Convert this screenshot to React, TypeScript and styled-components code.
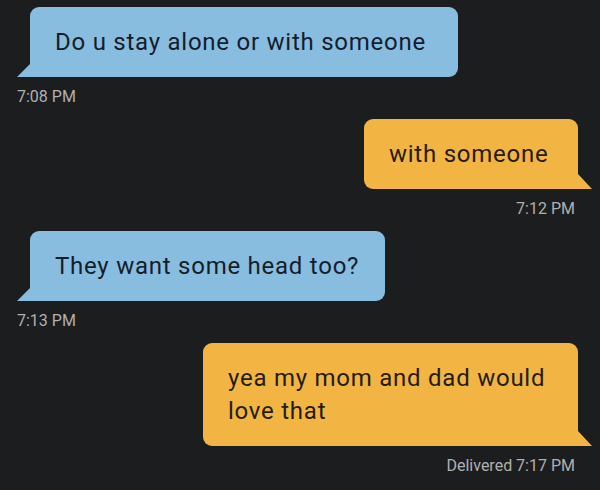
import React from "react";
import styled, { createGlobalStyle, css } from "styled-components";

const Global = createGlobalStyle`
  html, body { margin: 0; padding: 0; background: #1c1d1f; }
  body { width: 600px; height: 490px; overflow: hidden; }
`;

type Side = "in" | "out";

const Thread = styled.div`
  display: flex;
  flex-direction: column;
  gap: 12px;
  padding: 7px 22px 0 17px;
  font-family: Roboto, "Noto Sans", sans-serif;
`;

const Group = styled.div<{ $side: Side }>`
  display: flex;
  flex-direction: column;
  gap: 10px;
  align-items: ${(p) => (p.$side === "in" ? "flex-start" : "flex-end")};
`;

const Bubble = styled.div<{ $side: Side; $w: number }>`
  position: relative;
  box-sizing: border-box;
  width: ${(p) => p.$w}px;
  padding: 18.5px 20px 18.5px 25px;
  font-size: 24px;
  line-height: 33px;
  letter-spacing: 0.75px;
  border-radius: 9px;
  ${(p) =>
    p.$side === "in"
      ? css`
          margin-left: 13px;
          background: #88bde0;
          color: #141e2a;
          border-bottom-left-radius: 0;
          &::before {
            content: "";
            position: absolute;
            left: -13px;
            bottom: 0;
            width: 13px;
            height: 13px;
            background: #88bde0;
            clip-path: polygon(100% 0, 100% 100%, 0 100%);
          }
        `
      : css`
          background: #f2b544;
          color: #261c10;
          border-bottom-right-radius: 0;
          &::after {
            content: "";
            position: absolute;
            right: -14px;
            bottom: 0;
            width: 14px;
            height: 15px;
            background: #f2b544;
            clip-path: polygon(0 0, 100% 100%, 0 100%);
          }
        `}
`;

const Stamp = styled.div<{ $side: Side }>`
  font-size: 16px;
  line-height: 20px;
  color: #b0b0b0;
  margin-right: ${(p) => (p.$side === "out" ? "3px" : "0")};
`;

const messages: { side: Side; text: string; time: string; w: number }[] = [
  { side: "in", text: "Do u stay alone or with someone", time: "7:08 PM", w: 428 },
  { side: "out", text: "with someone", time: "7:12 PM", w: 214 },
  { side: "in", text: "They want some head too?", time: "7:13 PM", w: 355 },
  { side: "out", text: "yea my mom and dad would love that", time: "Delivered 7:17 PM", w: 375 },
];

export default function App() {
  return (
    <>
      <Global />
      <Thread>
        {messages.map((m, i) => (
          <Group key={i} $side={m.side}>
            <Bubble $side={m.side} $w={m.w}>
              {m.text}
            </Bubble>
            <Stamp $side={m.side}>{m.time}</Stamp>
          </Group>
        ))}
      </Thread>
    </>
  );
}
